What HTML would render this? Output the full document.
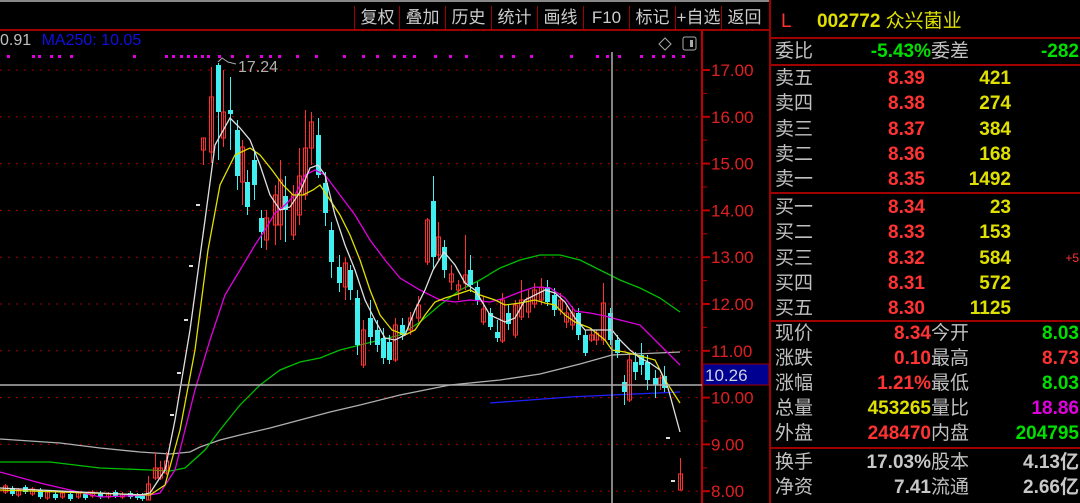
<!DOCTYPE html>
<html><head><meta charset="utf-8">
<style>
*{margin:0;padding:0;box-sizing:border-box}
body{width:1080px;height:503px;background:#000;overflow:hidden;position:relative;font-family:"Liberation Sans","Noto Sans CJK SC",sans-serif}
.tb{position:absolute;top:0;left:0;width:770px;height:31px;border-top:2px solid #888;border-bottom:2px solid #a00000}
.btn{position:absolute;top:4px;height:24px;border-left:1px solid #a00000;color:#ccc;font-size:17px;line-height:24px;text-align:center;width:46px}
.rp{position:absolute;left:769px;top:0;width:311px;height:503px;border-left:2px solid #a00000;color:#c0c0c0;font-size:19px}
.hl{position:absolute;left:0;width:311px;height:2px;background:#a00000}
.row{position:absolute;left:4px;height:25px;line-height:25px;width:306px;white-space:nowrap}
.row span{position:absolute}
.r{color:#ff3333;font-weight:bold}.g{color:#00e000;font-weight:bold}.y{color:#e0e000;font-weight:bold}.m{color:#e000e0;font-weight:bold}.w{color:#c8c8c8;font-weight:bold}
</style></head><body>
<div class="tb">
<div class="btn" style="left:354px">复权</div><div class="btn" style="left:399px">叠加</div><div class="btn" style="left:445px">历史</div><div class="btn" style="left:491px">统计</div><div class="btn" style="left:537px">画线</div><div class="btn" style="left:583px">F10</div><div class="btn" style="left:629px">标记</div><div class="btn" style="left:675px">+自选</div><div class="btn" style="left:721px">返回</div>
</div>
<div style="position:absolute;left:0;top:32px;font-size:16px;color:#c0c0c0">0.91 <span style="color:#1010e0;margin-left:6px">MA250: 10.05</span></div>
<svg id="ch" width="769" height="503" style="position:absolute;left:0;top:0" xmlns="http://www.w3.org/2000/svg"></svg>
<div class="rp">
<div class="row" style="top:7px;height:30px;line-height:30px;font-size:19px"><span style="left:6px;color:#ff3333">L</span><span style="left:42px;color:#e0e000"><b>002772</b> 众兴菌业</span></div>
<div class="hl" style="top:37px"></div>
<div class="row" style="top:39px"><span>委比</span><span class="g" style="right:150px">-5.43%</span><span style="left:156px">委差</span><span class="g" style="right:2px">-282</span></div>
<div class="hl" style="top:64px"></div>
<div id="book"></div>
<div class="hl" style="top:192px"></div>
<div class="hl" style="top:320px"></div>
<div class="row" style="top:321px"><span>现价</span><span class="r" style="right:150px">8.34</span><span style="left:156px">今开</span><span class="g" style="right:2px">8.03</span></div>
<div class="row" style="top:346px"><span>涨跌</span><span class="r" style="right:150px">0.10</span><span style="left:156px">最高</span><span class="r" style="right:2px">8.73</span></div>
<div class="row" style="top:371px"><span>涨幅</span><span class="r" style="right:150px">1.21%</span><span style="left:156px">最低</span><span class="g" style="right:2px">8.03</span></div>
<div class="row" style="top:396px"><span>总量</span><span class="y" style="right:150px">453265</span><span style="left:156px">量比</span><span class="m" style="right:2px">18.86</span></div>
<div class="row" style="top:421px"><span>外盘</span><span class="r" style="right:150px">248470</span><span style="left:156px">内盘</span><span class="g" style="right:2px">204795</span></div>
<div class="hl" style="top:447px"></div>
<div class="row" style="top:450px"><span>换手</span><span class="w" style="right:150px">17.03%</span><span style="left:156px">股本</span><span class="w" style="right:2px">4.13亿</span></div>
<div class="row" style="top:475px"><span>净资</span><span class="w" style="right:150px">7.41</span><span style="left:156px">流通</span><span class="w" style="right:2px">2.66亿</span></div>
</div>
<script>
var b=[["卖五","8.39","421"],["卖四","8.38","274"],["卖三","8.37","384"],["卖二","8.36","168"],["卖一","8.35","1492"],["买一","8.34","23"],["买二","8.33","153"],["买三","8.32","584"],["买四","8.31","572"],["买五","8.30","1125"]];
var h="";b.forEach(function(r,i){var t=(i<5?66+i*25.3:195+(i-5)*25.3);h+='<div class="row" style="top:'+t+'px"><span>'+r[0]+'</span><span class="r" style="right:156px">'+r[1]+'</span><span class="y" style="right:70px">'+r[2]+'</span>'+(i==7?'<span style="right:2px;font-size:12px;color:#ff3333">+5</span>':'')+'</div>';});
document.getElementById("book").innerHTML=h;
var s="",Y=function(p){return 70+(17-p)*46.8};
for(var p=8;p<=17;p++){var y=Y(p);s+='<line x1="0" y1="'+y+'" x2="700" y2="'+y+'" stroke="#a00000" stroke-dasharray="2 6"/>';s+='<line x1="702" y1="'+y+'" x2="710" y2="'+y+'" stroke="#c00000" stroke-width="2"/>';s+='<text x="711" y="'+(y+6)+'" fill="#e02020" font-size="17" font-family="Liberation Sans">'+p+'.00</text>';s+='<line x1="702" y1="'+(y+23.4)+'" x2="707" y2="'+(y+23.4)+'" stroke="#c00000"/>';}
s+='<line x1="702" y1="31" x2="702" y2="503" stroke="#c00000" stroke-width="2"/>';
var dots=[7,32,38,50,58,70,133,165,172,180,187,194,201,207,218,231,246,260,269,278,296,315,343,362,376,393,403,413,434,449,465,500,512,530,570,596,606,618,640,652,662,672,682];
dots.forEach(function(x){s+='<rect x="'+x+'" y="55" width="3" height="3" fill="#e000e0"/>'});
function pl(pts,c,w){s+='<polyline fill="none" stroke="'+c+'" stroke-width="'+(w||1.3)+'" points="'+pts+'"/>'}
pl("0,439 60,443 100,448 140,452 170,454 190,452 200,447 220,440 240,435 270,428 300,420 330,412 360,405 400,395 450,385 500,380 540,374 580,364 612,355 680,352","#b0b0b0");
pl("490,403 530,400 570,397 612,395 680,392","#2020ff");
pl("0,462 50,462 100,468 150,470 170,471 185,468 205,450 220,430 240,405 260,385 280,370 300,362 320,358 340,350 360,345 380,340 400,335 420,322 440,305 460,290 480,280 500,268 520,260 540,255 560,255 580,260 600,270 620,280 640,288 660,298 680,312","#00c000");
var cs=[[5,486,492,0],[12,488,494,1],[18,490,495,0],[25,487,492,1],[32,489,494,0],[40,490,497,1],[47,492,498,0],[55,494,498,1],[62,493,497,0],[70,494,499,1],[78,493,497,0],[85,494,498,1],[92,492,496,0],[100,493,497,1],[108,494,497,0],[115,492,496,1],[122,494,497,0],[130,493,497,1],[137,495,498,1],[142,495,499,1],
[148,484,500,0,476,500],[155,468,478,0,452,480],[160,468,478,0,461,480],[166,461,473,0,452,475],
[203,138,150,0,138,165],[211,97,152,0,67,163],[218,65,112,1,63,160],[223,112,138,0,70,147],[230,110,114,1,77,150],[237,130,176,1,120,190],[242,147,182,0,140,205],[247,182,207,1,170,215],[254,160,185,1,150,200],[261,218,232,1,210,248],[266,218,240,0,210,250],[275,195,225,0,185,245],[280,180,225,0,160,240],[285,196,210,1,176,242],[293,195,235,0,185,240],[299,176,215,0,148,225],[305,148,195,0,110,200],[311,122,148,0,112,165],[318,135,175,1,118,178],[325,183,213,1,172,226],[331,230,262,1,222,278],[339,267,283,1,255,292],[345,263,287,0,258,300],[350,270,290,1,265,300],[357,298,345,1,290,355],[363,330,365,0,320,368],[370,318,337,1,300,345],[377,330,345,1,320,352],[383,338,358,1,328,364],[389,342,360,1,335,364],[395,325,360,0,318,362],[402,325,335,1,318,340],[410,318,330,0,312,335],[418,305,318,0,296,322],[427,220,262,0,218,265],[433,201,257,1,176,270],[438,237,255,0,222,260],[444,247,270,1,240,278],[451,274,282,0,265,290],[458,285,290,0,280,300],[465,275,283,0,235,290],[470,270,285,1,255,292],[477,287,300,1,282,305],[483,309,322,0,296,325],[490,313,327,1,308,330],[497,332,338,1,320,342],[502,300,341,0,293,343],[508,313,324,1,305,330],[515,305,335,0,300,338],[521,300,317,0,280,320],[528,298,312,0,290,318],[534,290,304,0,283,308],[541,287,300,0,278,305],[547,287,302,1,280,306],[554,295,310,1,288,316],[560,300,310,0,293,315],[566,313,322,0,306,328],[572,313,325,0,306,330],[578,313,335,1,308,340],[585,335,353,1,330,356],[591,335,340,0,328,342],[596,333,340,0,330,345],[603,303,340,0,283,345],[610,313,340,1,308,345],[617,340,353,1,335,358],[624,382,392,1,375,405],[629,360,400,0,355,402],[635,362,372,1,352,380],[641,355,365,1,343,375],[647,362,380,1,355,390],[655,378,385,1,370,398],[660,378,385,0,375,390],[664,376,388,1,366,392],[680,474,490,0,458,490]];
cs.forEach(function(c){var col=c[3]?"#40f0f0":"#ff3030";var hi=c[4]||c[1]-2,lo=c[5]||c[2]+2;s+='<line x1="'+(c[0]+0.5)+'" y1="'+hi+'" x2="'+(c[0]+0.5)+'" y2="'+lo+'" stroke="'+col+'"/>';if(c[3])s+='<rect x="'+(c[0]-2)+'" y="'+c[1]+'" width="5" height="'+Math.max(2,c[2]-c[1])+'" fill="'+col+'"/>';else s+='<rect x="'+(c[0]-1.5)+'" y="'+c[1]+'" width="4" height="'+Math.max(2,c[2]-c[1])+'" fill="none" stroke="'+col+'"/>';});
[[172,414],[179,372],[186,319],[191,265],[198,204],[668,437],[673,480]].forEach(function(d){s+='<rect x="'+(d[0]-2)+'" y="'+d[1]+'" width="4" height="2" fill="#ddd"/>'});
pl("0,472 40,483 100,497 150,495 160,493 175,470 195,390 210,340 225,295 240,270 255,245 265,230 275,213 285,205 295,195 305,175 315,170 325,175 340,195 355,215 370,240 385,260 400,278 420,290 440,300 455,302 470,300 490,302 505,298 520,292 535,287 550,288 565,298 575,311 590,313 605,316 620,320 640,325 660,345 680,365","#e000e0");
pl("0,490 150,495 165,485 180,430 195,350 208,250 220,185 235,155 250,148 260,155 272,170 283,185 293,195 303,195 313,190 320,185 330,200 340,215 350,235 360,260 370,290 380,315 392,330 405,335 415,330 425,315 435,302 445,298 455,295 470,290 480,295 495,300 505,305 520,303 535,300 545,303 555,305 565,315 575,322 590,328 605,340 612,350 625,352 640,356 655,360 665,380 680,403","#e0e000");
pl("0,488 140,495 150,493 165,470 175,420 190,330 205,220 215,145 230,118 240,128 250,140 260,165 270,195 280,210 290,207 300,192 310,168 318,165 325,175 335,215 345,245 355,270 365,300 375,320 385,338 395,340 405,335 415,310 425,290 433,270 444,252 455,265 465,283 475,290 490,315 505,322 515,318 525,300 535,295 545,290 555,293 565,302 575,318 585,330 600,330 612,330 620,340 630,350 640,358 650,363 660,370 668,388 680,432","#e0e0e0");
s+='<line x1="0" y1="385" x2="702" y2="385" stroke="#b0b0b0" stroke-width="1.5"/><line x1="612" y1="52" x2="612" y2="503" stroke="#b0b0b0" stroke-width="1.5"/>';
s+='<rect x="703" y="364" width="66" height="21" fill="#000090" stroke="#a00000"/><text x="705" y="381" fill="#d0d0e0" font-size="17" font-family="Liberation Sans">10.26</text>';
s+='<polyline points="218,62 222,58 228,62 236,64" fill="none" stroke="#aaa"/><text x="238" y="72" fill="#b0b0b0" font-size="16" font-family="Liberation Sans">17.24</text>';
s+='<path d="M665 38 L671 44 L665 50 L659 44Z" fill="none" stroke="#aaa"/><rect x="683" y="37" width="13" height="13" rx="2" fill="none" stroke="#aaa"/><rect x="690" y="40" width="3" height="7" fill="#aaa"/>';
document.getElementById("ch").innerHTML=s;
</script>
</body></html>
